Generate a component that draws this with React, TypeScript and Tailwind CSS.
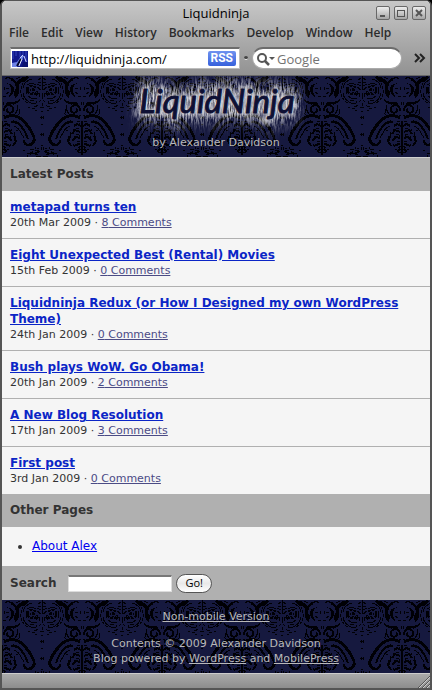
import React, { useState } from "react";

const menus = ["File", "Edit", "View", "History", "Bookmarks", "Develop", "Window", "Help"];

const posts = [
  { title: "metapad turns ten", date: "20th Mar 2009", comments: 8 },
  { title: "Eight Unexpected Best (Rental) Movies", date: "15th Feb 2009", comments: 0 },
  { title: "Liquidninja Redux (or How I Designed my own WordPress Theme)", date: "24th Jan 2009", comments: 0 },
  { title: "Bush plays WoW. Go Obama!", date: "20th Jan 2009", comments: 2 },
  { title: "A New Blog Resolution", date: "17th Jan 2009", comments: 3 },
  { title: "First post", date: "3rd Jan 2009", comments: 0 },
];

// Repeating damask wallpaper, one half is drawn and mirrored around the medallion
const Damask = ({ id }: { id: string }) => (
  <svg className="absolute inset-0 h-full w-full" aria-hidden="true" shapeRendering="crispEdges">
    <defs>
      <g id={`${id}-half`} fill="none" stroke="#000005" strokeWidth="1">
        {/* stem */}
        <path d="M0 0v14M0 17v6M0 27v3M1 2l3 2M1 6l3 1M1 10l4-2M1 14l3-2M2 17l1 4M1 24l2 2M3 11h2" />
        {/* medallion flower */}
        <path d="M6 12q4-4 7-1 3 3 0 6-3 3-7 0M7 14h5M9 12v5M4 17l3 3M14 13v4" strokeWidth="2" strokeDasharray="3 1" />
        <path d="M5 22q5 2 9-2M6 9q4-3 9 0M4 15h2M16 11v7M8 24h4" />
        {/* ring */}
        <path d="M10 3q8 2 9 9 1 10-6 14-4 3-7 1v-2" />
        <path d="M13 1q9 6 8 16-1 7-7 10" strokeDasharray="3 1" />
        <path d="M4 29q2 2 4 1M0 31h2M0 35h1M0 41h2M1 40v3M0 58h2M1 57v3M0 48h1" />
        <path d="M7 32h3M12 31h2M5 35l2-1" />
        {/* upper leaves */}
        <g fill="#000005" stroke="none">
          <path d="M38 1q-8 1-11 7-3 7 0 13l-3-1q-3-8 1-14 5-6 13-5z" />
          <path d="M36 7q-6 2-5 8 1 5 4 7-6-2-7-7-1-7 8-8z" />
          <path d="M14 0q8 1 11 6v5q-4-6-11-8z" />
          <path d="M22 23q5 4 12 3l3 2q-9 2-15-3z" />
          <path d="M25 11l3 5-1 7-3-4z" />
        </g>
        <path d="M33 12h3M33 16l3 2M33 1l4 2M29 3l2 2M38 11v3M36 20h3M22 1l4 2M29 26v3" />
        {/* curls */}
        <path d="M38 35q0-6-5-6-5 1-4 6 2 3 5 1 2-2 0-3" strokeWidth="2" />
        <path d="M25 29q-2 5 3 10M23 33v4M39 39l-3 2M22 37l3 3M39 26v3" />
        {/* long curved leaves */}
        <path d="M38 42q-8-5-16 0-9 7-14 19-1 7 5 8" strokeWidth="3" />
        <path d="M13 69q5 0 5-5" strokeWidth="2" />
        <path d="M31 46q-6-1-10 4-5 6-7 13" strokeWidth="2" />
        <path d="M28 50q-5 2-7 7l-3 5M29 44l-3 4M22 47l2 2M17 53l3 1M24 54l2 1" />
        {/* plume */}
        <path d="M40 45v34" strokeWidth="2" />
        <path d="M39 50l-4-2-3 2M38 56l-5-2-3 4M38 62l-4-1-4 4M38 68l-5 1M38 73l-3 3" strokeWidth="2" />
        <path d="M35 45h3M34 52h3M34 58h3M35 65h3M36 72l3-2M36 76h4M28 56v6M33 73h2M26 60l2 5M31 53v2M32 60v2M37 47v3M37 59v2M31 68l2 3" />
        <path d="M28 60l-2 5 3 5" strokeWidth="2" />
        {/* crown of the next row */}
        <path d="M1 71v3M3 72h2M2 76l5-2M8 73h4M4 79l6-2M12 77h3M14 81h3M1 80h5M9 81h3M17 74h2M0 69h1M15 79v2M7 71v2" />
        <path d="M3 75l4 3M9 76l3 2" strokeWidth="2" />
      </g>
      <pattern id={id} x="40" y="0" width="80" height="82" patternUnits="userSpaceOnUse">
        <rect width="80" height="82" fill="#16193f" />
        <use href={`#${id}-half`} />
        <use href={`#${id}-half`} transform="translate(80 0) scale(-1 1)" />
      </pattern>
    </defs>
    <rect width="100%" height="100%" fill={`url(#${id})`} />
  </svg>
);

const Logo = () => (
  <svg className="h-16 w-[200px]" viewBox="0 0 200 64" role="img" aria-label="LiquidNinja">
    <defs>
      <filter id="streaks" x="0" y="0" width="200" height="64" filterUnits="userSpaceOnUse">
        <feGaussianBlur in="SourceGraphic" stdDeviation="4 8" result="soft" />
        <feTurbulence type="fractalNoise" baseFrequency="0.7 0.12" numOctaves="4" seed="8" result="noise" />
        <feColorMatrix in="noise" type="matrix" values="0 0 0 0 0.8  0 0 0 0 0.8  0 0 0 0 0.83  3.2 0 0 0 -1.15" result="bars" />
        <feComposite in="bars" in2="soft" operator="in" />
      </filter>
      <filter id="halo" x="0" y="0" width="200" height="64" filterUnits="userSpaceOnUse">
        <feGaussianBlur stdDeviation="2 2" />
      </filter>
    </defs>
    <g fontFamily="Lato, sans-serif" fontStyle="italic" fontWeight="400" fontSize="33" textAnchor="middle">
      <text x="101" y="37" stroke="#fff" strokeWidth="14" strokeLinejoin="round" filter="url(#streaks)" aria-hidden="true">LiquidNinja</text>
      <text x="101" y="37" fill="#c9c9d0" stroke="#c9c9d0" strokeWidth="5" filter="url(#halo)" opacity="0.8" aria-hidden="true">LiquidNinja</text>
      <text x="101" y="37" fill="#0e1034" stroke="#0e1034" strokeWidth="1" strokeLinejoin="round">LiquidNinja</text>
    </g>
  </svg>
);

const WindowButton = ({ label, children }: { label: string; children: React.ReactNode }) => (
  <button aria-label={label} className="flex h-[14px] w-[14px] items-center justify-center rounded-[2px] border border-[#686868] bg-linear-to-b from-[#ededed] to-[#a5a5a5]">
    <svg width="12" height="12" viewBox="0 0 12 12" fill="none" stroke="#555" strokeWidth="2" shapeRendering="crispEdges">
      {children}
    </svg>
  </button>
);

const SectionTitle = ({ children }: { children: React.ReactNode }) => (
  <h2 className="bg-[#b0b0b0] px-2 py-2 text-[12px] leading-[17px] font-bold text-[#333]">{children}</h2>
);

const App = () => {
  const [url, setUrl] = useState("http://liquidninja.com/");
  const [google, setGoogle] = useState("");
  const [search, setSearch] = useState("");

  return (
    <div className="bg-black">
      <div className="flex min-h-screen flex-col overflow-hidden rounded-t-[6px] border-x-2 border-t border-b-2 border-[#555] bg-[#f5f5f5] font-['DejaVu_Sans',Verdana,sans-serif]">
        <header className="border-b border-[#686868] bg-linear-to-b from-[#c7c7c7] to-[#929292] pb-[6px] font-['Open_Sans',sans-serif] text-black">
          <div className="flex h-6 items-center px-1">
            <div className="w-[50px]" />
            <h1 className="flex-1 text-center text-[13px] leading-4">Liquidninja</h1>
            <div className="flex w-[50px] justify-end gap-1">
              <WindowButton label="Minimize">
                <path d="M3 9h5" />
              </WindowButton>
              <WindowButton label="Maximize">
                <path d="M2 3h8M2.500 3v7M9.500 3v7M2 9.500h8" strokeWidth="1" />
              </WindowButton>
              <WindowButton label="Close">
                <path d="M3 3l6 6M9 3l-6 6" shapeRendering="auto" />
              </WindowButton>
            </div>
          </div>
          <nav className="flex h-[22px] items-start gap-3 px-[7px] text-[12px] leading-4 font-semibold text-[#2c2c2c]">
            {menus.map((m) => (
              <button key={m}>{m}</button>
            ))}
          </nav>
          <div className="flex h-[22px] items-center pr-1 pl-2">
            <div className="flex h-[22px] min-w-0 flex-1 items-center border border-t-2 border-[#bdbdbd] border-t-[#6c6c6c] bg-white px-[1px]">
              <svg width="16" height="16" viewBox="0 0 16 16" className="shrink-0" aria-hidden="true">
                <rect width="16" height="16" fill="#10188a" />
                <path d="M1 0v8M4 0v5M8 0v6M14 0v10M11 0v4" stroke="#3445bd" />
                <path d="M0 16v-4l5-1 5-7 2 1-3 6-4 5z" fill="#6f83e6" />
                <path d="M8 7l3-3M12 5l3 8" stroke="#c9d2ff" />
                <path d="M5 15l4-7" stroke="#05072e" strokeWidth="2" />
                <path d="M7 15l3-7" stroke="#e8edff" />
                <path d="M11 11h5v5h-6z" fill="#0b1270" />
              </svg>
              <input
                aria-label="Address"
                className="min-w-0 flex-1 pl-[3px] text-[13px] leading-4 outline-none"
                value={url}
                onChange={(e) => setUrl(e.target.value)}
              />
              <button className="mr-[2px] h-[15px] rounded-[2px] bg-linear-to-b from-[#6f92ef] to-[#3761dc] px-[3px] font-['Roboto',sans-serif] text-[12px] leading-[15px] font-bold text-white">RSS</button>
            </div>
            <span className="mx-1 h-1 w-1 rounded-full border-b border-[#eee] bg-[#444]" />
            <label className="flex h-[22px] w-[150px] items-center rounded-full border border-t-2 border-[#aaa] border-t-[#6c6c6c] bg-white px-1">
              <svg width="20" height="14" viewBox="0 0 20 14" fill="none" stroke="#555" strokeWidth="2" className="shrink-0" aria-hidden="true">
                <circle cx="5" cy="6" r="4" />
                <path d="M8 9l4 4" strokeWidth="2.500" />
                <path d="M12 5h6l-3 3z" fill="#555" stroke="none" />
              </svg>
              <input
                aria-label="Google search"
                placeholder="Google"
                className="w-full min-w-0 text-[13px] leading-4 outline-none placeholder:text-[#737373]"
                value={google}
                onChange={(e) => setGoogle(e.target.value)}
              />
            </label>
            <button aria-label="More" className="ml-3">
              <svg width="12" height="10" viewBox="0 0 12 10" fill="none" stroke="#222" strokeWidth="2">
                <path d="M1 1l4 4-4 4M6 1l4 4-4 4" />
              </svg>
            </button>
          </div>
        </header>

        <div className="relative border-b border-[#d0d0d0] bg-[#16193f] pb-[7px] text-center">
          <Damask id="damask-top" />
          <div className="relative flex flex-col items-center">
            <Logo />
            <p className="-mt-1 text-[11px] leading-[14px] text-[#b8b8b8]">by Alexander Davidson</p>
          </div>
        </div>

        <SectionTitle>Latest Posts</SectionTitle>
        <ul>
          {posts.map((post) => (
            <li key={post.title} className="border-b border-[#b0b0b0] px-2 pt-2 pb-[7px] leading-4 last:border-b-0">
              <h3 className="text-[12px] leading-4 font-bold">
                <a href="#" className="text-[#0b25c6] underline">{post.title}</a>
              </h3>
              <p className="text-[11px] leading-4 text-[#333]">
                {post.date} · <a href="#" className="text-[#4b4b85] underline">{post.comments} Comments</a>
              </p>
            </li>
          ))}
        </ul>

        <SectionTitle>Other Pages</SectionTitle>
        <ul className="list-disc py-[11px] pr-2 pl-[30px] text-[12px] leading-[17px] text-[#333]">
          <li>
            <a href="#" className="text-[#0000ee] underline">About Alex</a>
          </li>
        </ul>

        <form className="flex h-[34px] items-center bg-[#b0b0b0] px-2" onSubmit={(e) => e.preventDefault()}>
          <label htmlFor="search" className="text-[12px] leading-4 font-bold text-[#333]">Search</label>
          <input
            id="search"
            className="ml-3 h-[17px] w-[104px] border border-t-2 border-[#ddd] border-t-[#777] bg-white px-1 text-[11px] outline-none"
            value={search}
            onChange={(e) => setSearch(e.target.value)}
          />
          <button className="ml-1 h-[19px] rounded-full border border-[#555] bg-linear-to-b from-white via-[#e9e9e9] to-white px-2 font-['Open_Sans',sans-serif] text-[11px] leading-4 text-black">Go!</button>
        </form>

        <footer className="relative flex-1 bg-[#16193f] pt-[9px] pb-1 text-center text-[11px] leading-[15px] text-[#b8b8b8]">
          <Damask id="damask-bottom" />
          <div className="relative">
            <p><a href="#" className="underline">Non-mobile Version</a></p>
            <p className="mt-3">Contents © 2009 Alexander Davidson</p>
            <p>
              Blog powered by <a href="#" className="underline">WordPress</a> and <a href="#" className="underline">MobilePress</a>
            </p>
          </div>
        </footer>

        <div className="flex h-[15px] items-end justify-end border-t border-[#ccc] bg-linear-to-b from-[#aaa] to-[#8d8d8d]">
          <svg width="12" height="12" viewBox="0 0 12 12" stroke="#555" aria-hidden="true">
            <path d="M0 12L12 0M4 12l8-8M8 12l4-4" />
            <path d="M1 12L12 1M5 12l7-7M9 12l3-3" stroke="#ccc" />
          </svg>
        </div>
      </div>
    </div>
  );
};

export default App;
